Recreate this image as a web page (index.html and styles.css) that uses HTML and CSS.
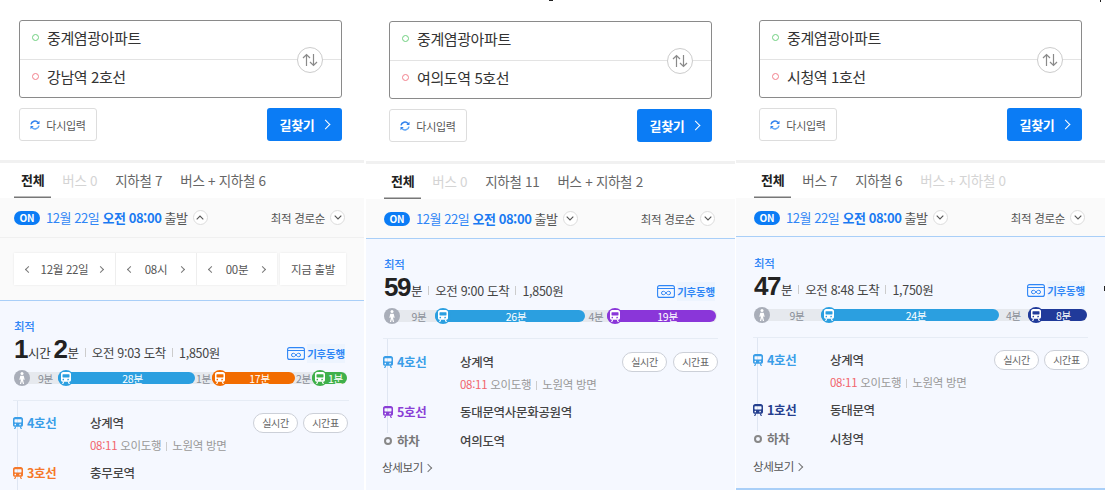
FILE: index.html
```html
<!DOCTYPE html>
<html lang="ko">
    <head>
        <meta charset="utf-8">
        <title>길찾기</title>
        <link rel="stylesheet" href="styles.css">
    </head>
    <body>
        <svg class="defs" width="0" height="0">
            <symbol id="train" viewBox="0 0 10 12">
                <path fill-rule="evenodd" d="M2.200 0h5.600C9 0 10 1 10 2.200V8c0 1-.8 1.800-1.800 1.800H1.800C.8 9.800 0 9 0 8V2.200C0 1 1 0 2.200 0zM2 2.200c-.3 0-.5.2-.5.5v2.300c0 .3.2.5.5.5h6c.3 0 .5-.2.5-.5V2.700c0-.3-.2-.5-.5-.5zM2.600 6.800a.8.8 0 1 0 0 1.500.8.8 0 0 0 0-1.500zM7.400 6.800a.8.8 0 1 0 0 1.500.8.8 0 0 0 0-1.500z" fill="currentColor"/>
                <path d="M2.200 9.500L1 12h1.300l1-2.500zM7.800 9.500L9 12H7.700l-1-2.500z" fill="currentColor"/>
            </symbol>
            <symbol id="walk" viewBox="0 0 16 16">
                <circle cx="8" cy="3.500" r="1.500" fill="#fff"/>
                <path d="M6.300 5.800h3.400l1 4h-1.100l-.3-1.500-.1 2.100.9 3.600H8.900L8 10.900 7.100 14H5.900l.9-3.600-.1-2.100-.3 1.500H5.300z" fill="#fff"/>
            </symbol>
            <symbol id="swap" viewBox="0 0 16 14">
                <path d="M4.500 13V1.500M1 5l3.500-3.500L8 5" fill="none" stroke="#8a8a8a" stroke-width="1.200"/>
                <path d="M11.500 1v11.500M8 9l3.500 3.500L15 9" fill="none" stroke="#8a8a8a" stroke-width="1.200"/>
            </symbol>
            <symbol id="refresh" viewBox="0 0 10 10">
                <path d="M1 4.300A4 4 0 0 1 8 2.500" fill="none" stroke="#2f80ed" stroke-width="1.500"/>
                <path d="M9 5.700A4 4 0 0 1 2 7.500" fill="none" stroke="#5fa5f5" stroke-width="1.500"/>
                <path d="M9.500 .8v3.200H6.300zM.5 9.200V6h3.200z" fill="#2f80ed"/>
            </symbol>
            <symbol id="pass" viewBox="0 0 18 13">
                <rect x=".6" y=".6" width="16.800" height="11.800" rx="2" fill="none" stroke="#2f86f6" stroke-width="1.100"/>
                <path d="M.6 3.500h16.800" stroke="#2f86f6" stroke-width="1"/>
                <path d="M9 8c-1-1.500-2-1.700-2.800-1.700a1.700 1.700 0 0 0 0 3.400C7 9.700 8 9.500 9 8c1-1.500 2-1.700 2.800-1.700a1.700 1.700 0 0 1 0 3.400C11 9.700 10 9.500 9 8z" fill="none" stroke="#2f86f6"/>
            </symbol>
            <symbol id="up" viewBox="0 0 8 5">
                <path d="M.7 4.300L4 1l3.300 3.300" fill="none" stroke="#555" stroke-width="1.100"/>
            </symbol>
            <symbol id="down" viewBox="0 0 8 5">
                <path d="M.7 .7L4 4 7.300 .7" fill="none" stroke="#555" stroke-width="1.100"/>
            </symbol>
        </svg>

        <div class="panels">
            <!-- panel 1: time picker open -->
            <section class="panel panel-one">
                <div class="search">
                    <div class="route-box">
                        <div class="place"><i class="dot dot-start"></i>중계염광아파트</div>
                        <div class="place"><i class="dot dot-end"></i>강남역 2호선</div>
                        <span class="swap"><svg width="16" height="14"><use href="#swap"/></svg></span>
                    </div>
                    <div class="actions">
                        <div class="reset"><svg width="10" height="10"><use href="#refresh"/></svg>다시입력</div>
                        <div class="go">길찾기<span class="go-arrow"></span></div>
                    </div>
                </div>
                <div class="tabs">
                    <span class="tab tab-on">전체</span>
                    <span class="tab tab-off">버스 0</span>
                    <span class="tab">지하철 7</span>
                    <span class="tab">버스 + 지하철 6</span>
                </div>
                <div class="filter">
                    <span class="on-pill">ON</span>
                    <span class="when">12월 22일 <b>오전 08:00</b> <em>출발</em></span>
                    <span class="round"><svg width="8" height="5"><use href="#up"/></svg></span>
                    <span class="sort">최적 경로순</span>
                    <span class="round"><svg width="8" height="5"><use href="#down"/></svg></span>
                </div>
                <div class="timepick">
                    <div class="stepper">
                        <div class="step step-date"><i class="arr arr-l"></i>12월 22일<i class="arr arr-r"></i></div>
                        <div class="step"><i class="arr arr-l"></i>08시<i class="arr arr-r"></i></div>
                        <div class="step"><i class="arr arr-l"></i>00분<i class="arr arr-r"></i></div>
                    </div>
                    <div class="now">지금 출발</div>
                </div>
                <div class="result">
                    <div class="best">최적</div>
                    <div class="summary">
                        <span class="dur"><b>1</b>시간 <b>2</b>분</span>
                        <span class="sep"></span><span>오전 9:03 도착</span>
                        <span class="sep"></span><span>1,850원</span>
                        <span class="pass"><svg width="18" height="13"><use href="#pass"/></svg><span class="pass-name">기후동행</span></span>
                    </div>
                    <div class="bar">
                        <div class="seg seg-walk" style="width:44px"><span class="seg-icon"><svg width="16" height="16"><use href="#walk"/></svg></span><span class="seg-text">9분</span></div>
                        <div class="seg seg-line line-4" style="width:137px"><span class="seg-icon"><svg width="10" height="12"><use href="#train"/></svg></span>28분</div>
                        <div class="seg seg-gap" style="width:17px">1분</div>
                        <div class="seg seg-line line-3" style="width:83px"><span class="seg-icon"><svg width="10" height="12"><use href="#train"/></svg></span>17분</div>
                        <div class="seg seg-gap" style="width:17px">2분</div>
                        <div class="seg seg-line line-2" style="width:35px"><span class="seg-icon"><svg width="10" height="12"><use href="#train"/></svg></span>1분</div>
                    </div>
                    <div class="legs">
                        <div class="leg">
                            <div class="leg-line c-4"><svg width="10" height="12"><use href="#train"/></svg>4호선</div>
                            <div class="leg-stop">상계역</div>
                            <div class="leg-btns"><span class="pill">실시간</span><span class="pill">시간표</span></div>
                            <div class="leg-info"><span class="arrive">08:11</span> 오이도행<span class="sep"></span>노원역 방면</div>
                        </div>
                        <div class="leg">
                            <div class="leg-line c-3"><svg width="10" height="12"><use href="#train"/></svg>3호선</div>
                            <div class="leg-stop">충무로역</div>
                        </div>
                    </div>
                </div>
            </section>

            <!-- panel 2 -->
            <section class="panel panel-two">
                <div class="search">
                    <div class="route-box">
                        <div class="place"><i class="dot dot-start"></i>중계염광아파트</div>
                        <div class="place"><i class="dot dot-end"></i>여의도역 5호선</div>
                        <span class="swap"><svg width="16" height="14"><use href="#swap"/></svg></span>
                    </div>
                    <div class="actions">
                        <div class="reset"><svg width="10" height="10"><use href="#refresh"/></svg>다시입력</div>
                        <div class="go">길찾기<span class="go-arrow"></span></div>
                    </div>
                </div>
                <div class="tabs">
                    <span class="tab tab-on">전체</span>
                    <span class="tab tab-off">버스 0</span>
                    <span class="tab">지하철 11</span>
                    <span class="tab">버스 + 지하철 2</span>
                </div>
                <div class="filter">
                    <span class="on-pill">ON</span>
                    <span class="when">12월 22일 <b>오전 08:00</b> <em>출발</em></span>
                    <span class="round"><svg width="8" height="5"><use href="#down"/></svg></span>
                    <span class="sort">최적 경로순</span>
                    <span class="round"><svg width="8" height="5"><use href="#down"/></svg></span>
                </div>
                <div class="result">
                    <div class="best">최적</div>
                    <div class="summary">
                        <span class="dur"><b>59</b>분</span>
                        <span class="sep"></span><span>오전 9:00 도착</span>
                        <span class="sep"></span><span>1,850원</span>
                        <span class="pass"><svg width="18" height="13"><use href="#pass"/></svg><span class="pass-name">기후동행</span></span>
                    </div>
                    <div class="bar">
                        <div class="seg seg-walk" style="width:51px"><span class="seg-icon"><svg width="16" height="16"><use href="#walk"/></svg></span><span class="seg-text">9분</span></div>
                        <div class="seg seg-line line-4" style="width:150px"><span class="seg-icon"><svg width="10" height="12"><use href="#train"/></svg></span>26분</div>
                        <div class="seg seg-gap" style="width:22px">4분</div>
                        <div class="seg seg-line line-5" style="width:109px"><span class="seg-icon"><svg width="10" height="12"><use href="#train"/></svg></span>19분</div>
                    </div>
                    <div class="legs">
                        <div class="leg">
                            <div class="leg-line c-4"><svg width="10" height="12"><use href="#train"/></svg>4호선</div>
                            <div class="leg-stop">상계역</div>
                            <div class="leg-btns"><span class="pill">실시간</span><span class="pill">시간표</span></div>
                            <div class="leg-info"><span class="arrive">08:11</span> 오이도행<span class="sep"></span>노원역 방면</div>
                        </div>
                        <div class="leg">
                            <div class="leg-line c-5"><svg width="10" height="12"><use href="#train"/></svg>5호선</div>
                            <div class="leg-stop">동대문역사문화공원역</div>
                        </div>
                        <div class="leg">
                            <div class="leg-line c-off"><i class="off-dot"></i>하차</div>
                            <div class="leg-stop">여의도역</div>
                        </div>
                    </div>
                    <div class="more">상세보기<i class="more-arrow"></i></div>
                </div>
            </section>

            <!-- panel 3 -->
            <section class="panel panel-three">
                <div class="search">
                    <div class="route-box">
                        <div class="place"><i class="dot dot-start"></i>중계염광아파트</div>
                        <div class="place"><i class="dot dot-end"></i>시청역 1호선</div>
                        <span class="swap"><svg width="16" height="14"><use href="#swap"/></svg></span>
                    </div>
                    <div class="actions">
                        <div class="reset"><svg width="10" height="10"><use href="#refresh"/></svg>다시입력</div>
                        <div class="go">길찾기<span class="go-arrow"></span></div>
                    </div>
                </div>
                <div class="tabs">
                    <span class="tab tab-on">전체</span>
                    <span class="tab">버스 7</span>
                    <span class="tab">지하철 6</span>
                    <span class="tab tab-off">버스 + 지하철 0</span>
                </div>
                <div class="filter">
                    <span class="on-pill">ON</span>
                    <span class="when">12월 22일 <b>오전 08:00</b> <em>출발</em></span>
                    <span class="round"><svg width="8" height="5"><use href="#down"/></svg></span>
                    <span class="sort">최적 경로순</span>
                    <span class="round"><svg width="8" height="5"><use href="#down"/></svg></span>
                </div>
                <div class="result">
                    <div class="best">최적</div>
                    <div class="summary">
                        <span class="dur"><b>47</b>분</span>
                        <span class="sep"></span><span>오전 8:48 도착</span>
                        <span class="sep"></span><span>1,750원</span>
                        <span class="pass"><svg width="18" height="13"><use href="#pass"/></svg><span class="pass-name">기후동행</span></span>
                    </div>
                    <div class="bar">
                        <div class="seg seg-walk" style="width:67px"><span class="seg-icon"><svg width="16" height="16"><use href="#walk"/></svg></span><span class="seg-text">9분</span></div>
                        <div class="seg seg-line line-4" style="width:178px"><span class="seg-icon"><svg width="10" height="12"><use href="#train"/></svg></span>24분</div>
                        <div class="seg seg-gap" style="width:29px">4분</div>
                        <div class="seg seg-line line-1" style="width:59px"><span class="seg-icon"><svg width="10" height="12"><use href="#train"/></svg></span>8분</div>
                    </div>
                    <div class="legs">
                        <div class="leg">
                            <div class="leg-line c-4"><svg width="10" height="12"><use href="#train"/></svg>4호선</div>
                            <div class="leg-stop">상계역</div>
                            <div class="leg-btns"><span class="pill">실시간</span><span class="pill">시간표</span></div>
                            <div class="leg-info"><span class="arrive">08:11</span> 오이도행<span class="sep"></span>노원역 방면</div>
                        </div>
                        <div class="leg">
                            <div class="leg-line c-1"><svg width="10" height="12"><use href="#train"/></svg>1호선</div>
                            <div class="leg-stop">동대문역</div>
                        </div>
                        <div class="leg">
                            <div class="leg-line c-off"><i class="off-dot"></i>하차</div>
                            <div class="leg-stop">시청역</div>
                        </div>
                    </div>
                    <div class="more">상세보기<i class="more-arrow"></i></div>
                </div>
            </section>
        </div>
        <i class="speck speck-top"></i>
        <i class="speck speck-corner"></i>
        <i class="speck speck-side"></i>
    </body>
</html>
```

FILE: styles.css
```css
html, body {
    margin: 0;
    height: 490px;
    overflow: hidden;
    background-color: #fff;
}
body {
    position: relative;
    font-family: "Noto Sans CJK KR", "Noto Sans", sans-serif;
    color: #333;
    font-size: 13px;
    letter-spacing: -0.3px;
}
.defs {
    display: block;
    height: 0;
}
.panels {
    display: grid;
    grid-template-columns: 366px 370px 369px;
    height: 490px;
    overflow: hidden;
}
.panel {
    --pad: 18px;
    --pad-right: 19px;
    display: flex;
    flex-direction: column;
    min-width: 0;
}
.panel-one {
    --pad: 14px;
    --pad-right: 17px;
    margin-right: 2px;
}
.panel-two {
    margin-right: 1px;
}

/* search block */
.search {
    box-sizing: content-box;
    height: 140px;
    padding: 20px 0 0 calc(var(--pad) + 5px);
    border-bottom: 3px solid #f1f1f1;
}
.panel-two .search {
    padding-top: 21px;
}
.route-box {
    position: relative;
    box-sizing: border-box;
    width: 323px;
    height: 78px;
    border: 1px solid #8a8a8a;
    border-radius: 3px;
    background: linear-gradient(#e3e3e3, #e3e3e3) 0 38px / 100% 1px no-repeat;
}
.place {
    display: flex;
    align-items: center;
    height: 33px;
    padding: 0 0 5px 12px;
    font-size: 15px;
    letter-spacing: -0.4px;
    color: #333;
}
.place + .place {
    margin-top: 1px;
}
.dot {
    width: 5px;
    height: 5px;
    border: 1.500px solid #6fd07f;
    border-radius: 50%;
    margin-right: 8px;
}
.dot-end {
    border-color: #f2808c;
}
.swap {
    position: absolute;
    top: 26px;
    right: 18px;
    display: flex;
    align-items: center;
    justify-content: center;
    box-sizing: border-box;
    width: 26px;
    height: 26px;
    border: 1px solid #ccc;
    border-radius: 50%;
    background: #fff;
}
.actions {
    display: flex;
    justify-content: space-between;
    width: 323px;
    margin-top: 10px;
}
.reset {
    display: flex;
    align-items: center;
    justify-content: center;
    gap: 6px;
    box-sizing: border-box;
    width: 78px;
    height: 33px;
    border: 1px solid #ddd;
    border-radius: 3px;
    font-size: 11px;
    color: #555;
}
.go {
    display: flex;
    align-items: center;
    justify-content: center;
    gap: 11px;
    width: 75px;
    height: 33px;
    border-radius: 3px;
    background: #0b7cf5;
    color: #fff;
    font-size: 13px;
    font-weight: 700;
}
.go-arrow {
    width: 6px;
    height: 6px;
    border: solid #fff;
    border-width: 1.500px 1.500px 0 0;
    transform: rotate(45deg);
    margin-left: -3px;
}

/* tabs */
.tabs {
    display: flex;
    gap: 4px;
    height: 35px;
    padding-left: var(--pad);
    background: #fff;
}
.tab {
    padding: 0 7px;
    line-height: 34px;
    font-size: 13.500px;
    color: #666;
    white-space: nowrap;
}
.tab-on {
    font-weight: 700;
    font-size: 13px;
    color: #222;
    box-shadow: inset 0 -1.500px 0 #777;
}
.tab-off {
    color: #d4d4d4;
}

/* departure filter */
.filter {
    display: flex;
    align-items: center;
    box-sizing: border-box;
    height: 40px;
    padding: 0 calc(var(--pad-right) + 1px) 0 var(--pad);
    background: #fafafa;
    border-bottom: 1px solid #f0f0f0;
}
.panel-one .filter {
    padding-right: 19px;
}
.panel-two .filter, .panel-three .filter {
    border-bottom: 1px solid #a9cff8;
}
.panel-three .filter {
    height: 39px;
    padding-top: 1px;
}
.on-pill {
    width: 26px;
    height: 14px;
    border-radius: 7px;
    background: #0b7cf5;
    color: #fff;
    font-size: 10px;
    font-weight: 700;
    line-height: 14px;
    text-align: center;
    letter-spacing: 0;
}
.when {
    margin-left: 6px;
    font-size: 13px;
    color: #2f86f6;
    letter-spacing: -0.45px;
}
.when b {
    font-weight: 700;
    color: #1a7af2;
}
.when em {
    font-style: normal;
    color: #555;
}
.round {
    display: flex;
    align-items: center;
    justify-content: center;
    box-sizing: border-box;
    width: 15px;
    height: 15px;
    margin-left: 5px;
    border: 1px solid #ddd;
    border-radius: 50%;
    background: #fff;
}
.sort {
    margin-left: auto;
    font-size: 11.500px;
    color: #555;
}

/* time picker */
.timepick {
    display: flex;
    gap: 3px;
    box-sizing: border-box;
    height: 62px;
    padding: 15px 0 0 var(--pad);
    background: #fafafa;
}
.stepper {
    display: flex;
    width: 263px;
    height: 32px;
    background: #fff;
    box-shadow: 0 0 2px #e6e6e6;
}
.step {
    display: flex;
    flex: 1;
    align-items: center;
    justify-content: space-between;
    box-sizing: border-box;
    padding: 0 12px;
    border-left: 1px solid #eee;
    font-size: 11.500px;
    color: #555;
}
.step-date {
    flex: 0 0 101px;
    border-left: 0;
}
.arr {
    width: 4px;
    height: 4px;
    border: solid #777;
    border-width: 1px 1px 0 0;
}
.arr-l {
    transform: rotate(-135deg);
}
.arr-r {
    transform: rotate(45deg);
}
.now {
    width: 66px;
    height: 32px;
    line-height: 32px;
    text-align: center;
    background: #fff;
    box-shadow: 0 0 2px #e6e6e6;
    font-size: 11.500px;
    color: #555;
}

/* result */
.result {
    flex: 1;
    padding: 17px var(--pad-right) 0 var(--pad);
    background: #f5f8ff;
}
.panel-one .result {
    border-top: 1px solid #a9cff8;
}
.panel-three .result {
    padding-top: 18px;
    border-bottom: 2px solid #a9cff8;
}
.best {
    font-size: 11.500px;
    font-weight: 500;
    line-height: 17px;
    color: #2f86f6;
}
.summary {
    display: flex;
    align-items: flex-end;
    height: 27px;
    font-size: 12.500px;
    line-height: 19px;
    color: #444;
}
.dur {
    font-size: 12.500px;
    color: #333;
}
.dur b {
    font-family: "Liberation Sans", sans-serif;
    font-size: 26px;
    line-height: 19px;
    font-weight: 700;
    color: #222;
    letter-spacing: -1.500px;
    margin-right: 1px;
}
.sep {
    display: inline-block;
    width: 1px;
    height: 9px;
    margin: 0 6px;
    background: #ccc;
    vertical-align: -1px;
}
.summary .sep {
    align-self: flex-end;
    margin-bottom: 5px;
}
.pass {
    display: flex;
    align-items: center;
    gap: 2px;
    margin: 0 1px -1px auto;
    font-size: 10.500px;
    font-weight: 700;
    color: #2f86f6;
    letter-spacing: -0.2px;
}
.panel-one .pass {
    margin-right: 2px;
}
.pass-name {
    background: #edf4fe;
}
.bar {
    display: flex;
    align-items: center;
    width: 333px;
    height: 16px;
    margin-top: 8px;
    background: linear-gradient(#e6e9ee, #e6e9ee) 0 2px / 100% 12px no-repeat;
    border-radius: 8px;
    font-size: 10.500px;
    letter-spacing: -0.2px;
    color: #8a8f98;
}
.seg {
    position: relative;
    display: flex;
    align-items: center;
    justify-content: center;
    flex: none;
    box-sizing: border-box;
    height: 12px;
    white-space: nowrap;
}
.seg-walk {
    justify-content: flex-start;
}
.seg-walk .seg-icon {
    background: #a9aeb9;
}
.seg-text {
    flex: 1;
    text-align: center;
    padding-left: 3px;
}
.seg-line {
    padding-left: 12px;
    border-radius: 6px;
    color: #fff;
}
.seg-icon {
    display: flex;
    align-items: center;
    justify-content: center;
    flex: none;
    width: 16px;
    height: 16px;
    border-radius: 50%;
}
.seg-line .seg-icon {
    position: absolute;
    left: 0;
    top: -2px;
    background: inherit;
    color: #fff;
}
.line-1 { background: #203a9a; }
.line-2 { background: #3fb04a; }
.line-3 { background: #f26c00; }
.line-4 { background: #2b9fe0; }
.line-5 { background: #8a36d9; }
.c-1 { color: #25408f; }
.c-3 { color: #f5782a; }
.c-4 { color: #3a9ee8; }
.c-5 { color: #8a3fd6; }
.c-off { color: #777; }

/* route legs */
.legs {
    position: relative;
    margin: 14px -2px 0 -1px;
    padding-top: 12px;
    border-top: 1px solid #e6ecf5;
}
.panel-two .legs {
    padding-top: 13px;
}
.legs::before {
    content: "";
    position: absolute;
    left: 4px;
    top: 0;
    bottom: 18px;
    width: 1px;
    background: #dfe6f2;
}
.panel-one .legs::before {
    bottom: -10px;
}
.leg {
    position: relative;
    display: grid;
    grid-template-columns: 77px 1fr auto;
    align-items: center;
    align-content: start;
    min-height: 29px;
}
.leg:last-child {
    min-height: 20px;
}
.leg-line {
    display: flex;
    align-items: center;
    gap: 4px;
    font-size: 12.500px;
    font-weight: 700;
    line-height: 20px;
}
.leg-stop {
    font-size: 12.500px;
    font-weight: 500;
    line-height: 20px;
    color: #444;
}
.leg-btns {
    display: flex;
    gap: 6px;
}
.panel-one .leg-btns {
    gap: 5px;
    margin-right: 1px;
}
.panel-three .leg-btns {
    gap: 5px;
    margin-right: -1px;
}
.pill {
    box-sizing: border-box;
    width: 45px;
    height: 20px;
    border: 1px solid #ccd0d8;
    border-radius: 10px;
    background: #fff;
    font-size: 10px;
    line-height: 18px;
    text-align: center;
    color: #666;
}
.leg-info {
    grid-column: 2 / 4;
    margin: 4px 0 9px;
    font-size: 11.500px;
    line-height: 17px;
    color: #999;
}
.leg-info .sep {
    margin: 0 5px;
}
.arrive {
    color: #f2646c;
}
.off-dot {
    box-sizing: border-box;
    width: 8px;
    height: 8px;
    margin: 0 1px;
    border: 2px solid #888;
    border-radius: 50%;
}
.more {
    display: flex;
    align-items: center;
    gap: 2px;
    margin: 8px 0 0 -2px;
    font-size: 11.500px;
    line-height: 17px;
    color: #555;
}
.panel-three .more {
    margin: 9px 0 0 -1px;
}
.more-arrow {
    width: 5px;
    height: 5px;
    border: solid #777;
    border-width: 1px 1px 0 0;
    transform: rotate(45deg);
}

/* stray capture marks along the screenshot's edges */
.speck {
    position: absolute;
    background: #222;
}
.speck-top {
    left: 549px;
    top: 0;
    width: 4px;
    height: 1px;
}
.speck-corner {
    left: 1100px;
    top: 0;
    width: 1px;
    height: 2px;
}
.speck-side {
    left: 1104px;
    top: 286px;
    width: 1px;
    height: 5px;
}
```
